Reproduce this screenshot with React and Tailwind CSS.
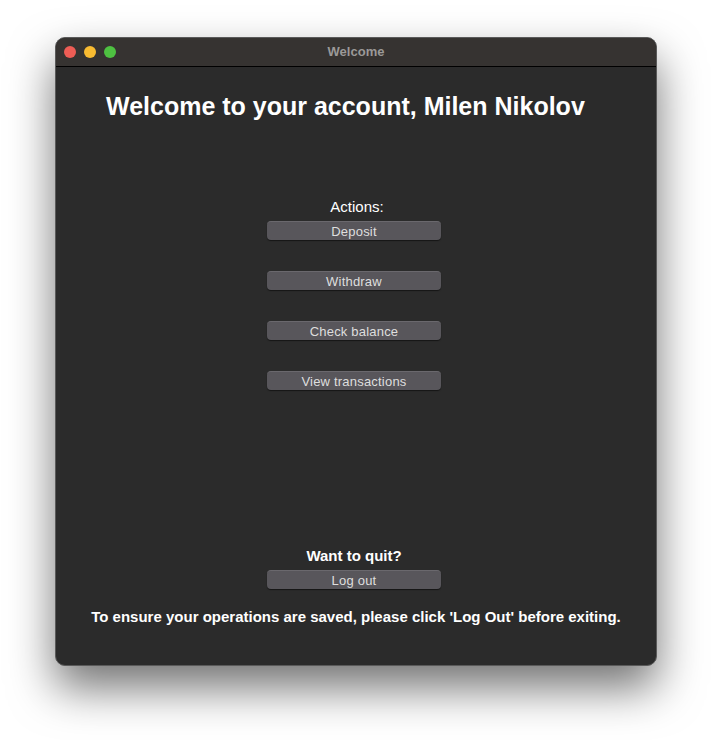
import React from 'react';

const actions = ['Deposit', 'Withdraw', 'Check balance', 'View transactions'];

const MacButton = ({ label, className = '' }) => (
  <button
    className={`w-[174px] h-[19px] rounded-[4px] bg-[#58565b] border-t border-[#6a686d] shadow-[0_1px_1px_rgba(0,0,0,0.5)] text-[13px] leading-[17px] tracking-[0.2px] text-[#dedede] ${className}`}
  >
    {label}
  </button>
);

export default function App() {
  return (
    <div
      className="w-[712px] h-[740px] bg-white pt-[37px] pl-[55px]"
      style={{ fontFamily: '"Liberation Sans", Arial, sans-serif' }}
    >
      <div className="w-[602px] h-[629px] rounded-[10px] overflow-hidden border border-[#5a5a5a] bg-[#2b2b2b] shadow-[0_22px_45px_rgba(0,0,0,0.55)] flex flex-col">
        {/* title bar */}
        <div className="relative h-[29px] shrink-0 bg-[#363331] border-b border-black flex items-center">
          <div className="flex items-center gap-[8px] pl-[8px]">
            <span className="w-[12px] h-[12px] rounded-full bg-[#ee5d55]" />
            <span className="w-[12px] h-[12px] rounded-full bg-[#f8bb31]" />
            <span className="w-[12px] h-[12px] rounded-full bg-[#4ec141]" />
          </div>
          <div className="absolute inset-0 flex items-center justify-center text-[13px] font-bold text-[#9b9998]">
            Welcome
          </div>
        </div>

        {/* content */}
        <div className="flex-1 flex flex-col text-white">
          <h1 className="mt-[25px] pl-[50px] text-[25px] leading-[28px] font-bold">
            Welcome to your account, Milen Nikolov
          </h1>

          <div className="mt-[78px] flex flex-col items-center pr-[4px]">
            <div className="text-[15px] leading-[17px] pl-[6px]">Actions:</div>
            <div className="mt-[6px] flex flex-col gap-[31px]">
              {actions.map((a) => (
                <MacButton key={a} label={a} />
              ))}
            </div>
          </div>

          <div className="mt-[157px] flex flex-col items-center pr-[4px]">
            <div className="text-[15px] leading-[17px] font-bold">Want to quit?</div>
            <MacButton label="Log out" className="mt-[6px]" />
          </div>

          <div className="mt-[19px] text-center text-[15px] leading-[17px] font-bold">
            To ensure your operations are saved, please click 'Log Out' before exiting.
          </div>
        </div>
      </div>
    </div>
  );
}
